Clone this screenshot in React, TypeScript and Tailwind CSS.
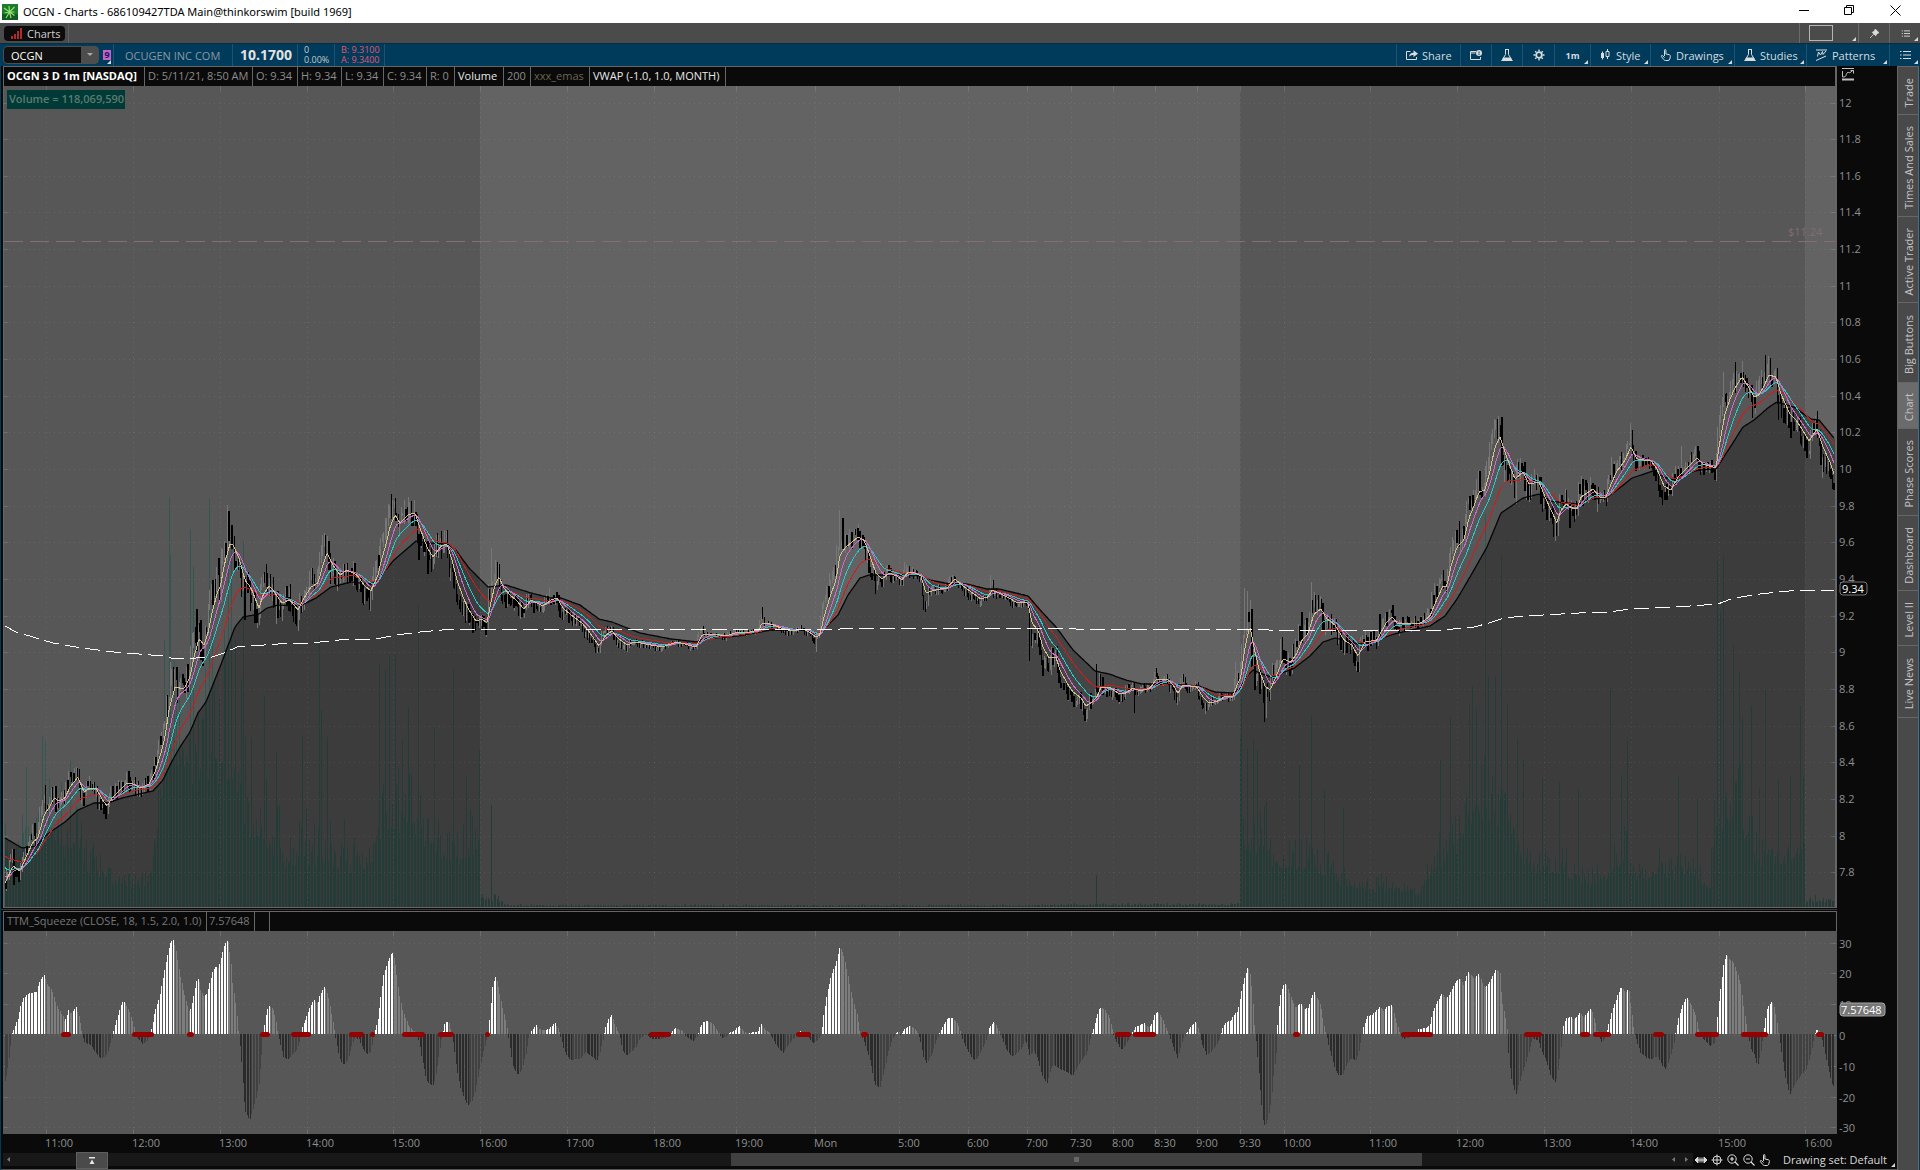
import { ReactNode } from 'react';

type Pt = [number, number];

// "x,y x,y ..." -> points
const parse = (s: string): Pt[] => s.trim().split(/\s+/).map((p) => p.split(',').map(Number) as Pt);

const fast = parse(`5,883 13,866 20,871 27,855 33,842 38,838 42,823 45,813 49,808 54,798 59,801 65,798 70,787 78,777 84,792
90,788 96,788 102,799 107,806 112,798 118,792 127,783 133,784 141,788 149,784 155,772 161,753 165,737 169,710 175,687 184,689
190,677 194,657 199,639 204,645 208,633 212,613 218,590 220,588 225,562 230,544 233,545 239,558 245,580 251,588 259,608
263,595 269,586 273,590 282,603 290,600 298,610 304,598 311,587 318,583 322,568 327,553 333,565 340,575 347,570 357,575
364,585 371,591 378,575 382,558 386,545 390,527 395,515 400,523 408,515 415,513 420,528 427,547 433,557 441,546 447,544
452,560 457,580 463,597 469,610 476,621 482,619 487,623 491,602 495,585 499,577 504,588 510,595 516,600 524,609 531,600
543,606 551,600 557,598 563,608 571,615 582,623 588,630 599,646 606,635 612,631 618,638 627,645 635,642 646,644 662,647
677,642 696,647 702,635 713,634 726,636 738,632 750,632 759,630 762,623 771,624 781,628 791,631 803,629 809,632 816,637
820,635 824,617 830,597 836,580 840,555 846,547 852,542 858,537 864,540 869,553 876,573 882,579 889,573 897,576 902,580
907,573 913,572 921,576 926,593 932,591 940,589 947,588 955,579 962,585 971,592 981,599 988,597 992,590 999,593 1009,598
1016,602 1028,603 1032,623 1038,630 1043,647 1049,658 1056,657 1060,670 1067,683 1073,692 1081,698 1086,706 1091,703
1097,697 1101,687 1109,687 1118,693 1124,694 1133,688 1140,691 1150,688 1156,680 1167,679 1173,685 1178,693 1183,685
1197,687 1203,697 1209,703 1218,701 1224,697 1233,696 1237,685 1241,677 1244,653 1248,633 1250,627 1254,647 1259,669
1265,686 1270,690 1276,677 1283,659 1291,662 1297,653 1302,640 1308,634 1314,614 1321,609 1327,619 1335,625 1344,640
1352,645 1358,656 1365,642 1377,640 1386,623 1392,617 1398,624 1411,623 1421,623 1430,616 1434,606 1438,597 1443,586
1447,586 1451,566 1457,547 1464,540 1469,518 1474,506 1479,492 1485,490 1490,471 1495,447 1500,437 1506,455 1511,469
1515,479 1523,472 1529,484 1539,482 1546,499 1551,510 1557,523 1560,512 1566,504 1572,508 1577,509 1581,497 1593,489
1600,497 1606,497 1611,484 1617,471 1624,462 1631,447 1637,459 1651,461 1657,469 1664,486 1671,490 1678,477 1687,468
1697,458 1703,464 1716,468 1719,447 1725,414 1730,399 1735,388 1742,377 1748,386 1754,397 1759,395 1764,386 1769,375
1776,377 1781,394 1790,414 1796,420 1802,429 1809,441 1817,429 1823,447 1830,462 1834,474`);

const slow = parse(`5,838 22,848 37,846 43,838 49,833 65,822 78,810 94,803 108,803 122,798 139,794 153,791 163,780 171,763
180,747 190,732 198,713 206,702 212,687 220,667 229,643 235,627 243,617 259,614 267,608 278,605 300,606 316,598 331,587
351,582 371,584 378,580 384,572 394,560 408,548 416,541 429,543 447,544 455,549 469,568 488,587 506,585 531,593 551,598
561,598 580,605 599,619 612,622 640,633 671,639 697,642 703,639 738,636 771,630 805,630 816,633 822,632 830,623 838,615
848,595 860,578 869,575 901,575 922,576 930,580 950,584 967,584 987,589 999,589 1016,593 1028,596 1042,612 1056,627
1073,650 1095,671 1109,674 1126,680 1142,684 1167,684 1199,686 1215,692 1233,693 1240,688 1248,675 1253,670 1260,673
1271,677 1276,677 1281,673 1293,669 1310,656 1323,642 1335,638 1344,640 1358,644 1377,640 1394,634 1411,630 1430,626
1445,616 1457,599 1470,577 1487,547 1501,513 1523,498 1539,494 1550,501 1558,502 1577,504 1592,499 1606,498 1617,490
1632,478 1653,471 1664,477 1672,480 1685,474 1699,470 1716,469 1729,449 1743,427 1754,420 1769,407 1777,402 1794,407
1811,419 1819,420 1834,438`);

const vwap = `5,626 16,632 33,637 53,643 82,648 114,652 163,656 171,658 196,658 212,657 224,653 237,647 278,644 310,643
339,640 376,639 396,635 420,632 453,629 840,629 845,628 1070,628 1076,629 1252,629 1269,630 1445,630 1453,629 1474,627
1489,623 1504,618 1525,616 1579,613 1609,612 1630,609 1676,607 1718,604 1731,599 1752,595 1777,592 1802,590 1834,590`;

// half height of the one minute noise
const noise = parse(`5,9 40,10 100,8 160,9 170,16 240,17 300,14 400,13 480,12 500,10 540,7 600,5 650,3 750,3 820,4 838,12
870,9 900,5 1025,4 1032,10 1090,9 1130,6 1232,5 1243,14 1275,15 1320,11 1400,7 1440,10 1500,13 1560,12 1620,9 1650,8
1710,7 1722,14 1780,12 1834,9`);

const wicks = parse(`14,885 46,785 78,768 103,814 170,662 197,609 227,505 229,511 233,527 245,620 258,626 266,564 277,624
300,620 325,533 327,538 363,605 386,518 391,494 394,502 404,500 409,497 415,500 419,560 428,574 438,533 445,530 473,633
476,631 487,629 491,548 497,562 524,618 549,588 599,652 762,607 763,614 816,652 829,573 840,510 843,518 858,524 876,594
905,562 924,610 990,575 1030,661 1043,676 1052,675 1073,707 1085,718 1086,722 1097,664 1134,713 1156,668 1206,714
1236,662 1244,588 1248,591 1250,600 1255,690 1265,722 1267,712 1282,637 1301,612 1312,582 1318,595 1320,596 1358,672
1380,614 1392,605 1443,570 1460,521 1480,471 1495,420 1498,416 1501,417 1504,482 1526,500 1546,520 1557,536 1570,528
1590,477 1598,512 1612,457 1630,423 1632,430 1663,505 1667,500 1681,446 1697,446 1723,372 1735,362 1742,361 1752,418
1766,355 1768,356 1779,420 1790,438 1806,458 1818,411 1823,478 1832,489`);

const volumeLevel = parse(`5,80 30,80 45,105 80,70 100,50 115,36 140,30 150,45 155,85 165,190 175,180 190,190 215,210
240,190 247,120 270,95 290,60 320,75 340,62 370,52 385,120 420,110 450,65 480,80 481,12 495,10 510,2 1027,2 1090,3 1230,3
1239,5 1240,100 1260,90 1280,55 1310,62 1340,38 1370,24 1400,26 1420,16 1430,45 1460,100 1480,140 1505,120 1520,65
1560,50 1580,34 1606,34 1620,65 1640,42 1690,48 1710,26 1718,130 1740,120 1760,60 1804,75 1806,8 1835,8`);

const volumeSpikes = parse(`27,767 43,736 45,741 70,761 165,640 169,497 170,555 191,529 194,567 210,499 212,600 224,630
228,555 231,540 236,640 243,541 252,738 265,696 277,751 302,737 320,637 322,710 327,737 379,664 386,670 389,655 395,655
402,740 409,708 418,606 435,726 453,670 466,775 479,750 491,805 1097,875 1240,737 1242,697 1248,749 1254,740 1257,750
1300,765 1312,715 1324,790 1344,808 1441,760 1450,718 1469,704 1473,686 1477,709 1486,515 1488,676 1495,677 1502,555
1508,704 1517,738 1523,760 1542,778 1560,782 1578,790 1611,688 1622,775 1628,740 1679,777 1697,799 1718,560 1721,612
1724,555 1734,645 1739,672 1742,717 1751,706 1760,787 1765,690 1779,779 1790,777 1800,706 1803,777`);

const squeeze = parse(`4,-51 7,-40 10,-20 12,0 18,15 21,28 24,36 29,41 37,42 39,50 44,60 47,50 51,46 53,42 57,28 63,18 65,12
69,24 71,20 76,27 79,18 82,3 83,-3 85,-9 90,-10 94,-16 100,-24 105,-23 109,-15 113,-2 114,4 118,18 122,32 125,32 129,24
133,12 135,3 137,-3 143,-10 147,-7 150,-1 152,7 155,22 160,38 164,60 167,77 170,90 173,95 176,85 180,60 184,42 188,28
189,22 191,25 194,40 197,55 199,55 201,44 204,38 207,40 210,52 213,64 216,68 219,66 221,75 224,88 228,95 231,76 233,50
236,30 238,10 240,-10 242,-32 244,-65 246,-78 250,-86 253,-76 256,-65 259,-50 262,-20 263,-6 264,4 267,24 269,28 273,26
276,15 278,2 280,-8 284,-24 289,-25 293,-20 297,-16 301,-4 302,6 306,15 310,27 314,34 318,30 320,38 325,48 329,35 333,12
335,1 337,-10 340,-25 344,-31 348,-25 352,-12 355,-4 359,-5 363,-14 367,-20 371,-18 373,-6 375,3 378,15 382,45 384,60
388,72 391,80 393,81 396,66 399,42 403,23 406,15 409,8 413,4 416,1 419,-7 422,-24 427,-47 433,-52 435,-46 438,-30 441,-10
443,1 445,11 447,13 450,10 451,2 454,-10 457,-35 461,-55 465,-66 468,-71 473,-66 476,-55 479,-38 482,-25 487,-6 489,4
491,28 493,50 496,58 499,45 503,25 506,13 508,1 510,-13 513,-32 518,-41 522,-36 526,-20 529,-4 532,3 536,9 539,5 545,4
549,5 555,11 558,6 561,-3 565,-18 570,-26 580,-25 586,-18 592,-22 597,-27 601,-15 604,-1 606,7 609,16 612,19 615,9 620,-2
623,-16 627,-22 633,-16 637,-12 640,-4 646,-1 652,-5 660,-5 668,-3 671,1 675,6 683,3 685,-1 693,-7 698,-2 700,6 703,12
707,13 713,11 718,2 722,-4 726,-3 730,1 736,5 739,8 743,4 748,0 754,2 758,2 761,10 766,4 771,-1 777,-12 783,-19 789,-11
795,-3 800,3 805,0 809,-4 814,-10 820,-3 822,5 824,22 828,45 832,60 836,70 840,88 844,78 848,60 852,38 857,20 860,3
864,-7 869,-22 872,-34 875,-50 880,-54 884,-38 888,-20 893,-5 898,3 901,-1 904,4 910,9 917,3 920,-4 924,-24 927,-29
932,-20 937,-6 941,3 944,10 948,16 953,16 958,10 961,0 965,-10 970,-20 974,-26 978,-24 983,-14 987,-4 989,6 994,13 999,4
1003,-6 1007,-16 1013,-23 1022,-14 1026,-6 1030,-22 1034,-17 1038,-25 1042,-40 1047,-50 1051,-35 1054,-31 1060,-35
1067,-38 1073,-42 1077,-34 1083,-24 1087,-20 1091,-4 1093,3 1096,14 1100,27 1105,24 1109,18 1113,3 1116,-7 1122,-16
1128,-7 1132,1 1136,7 1144,11 1149,7 1152,10 1155,20 1158,22 1162,17 1166,7 1169,-1 1173,-12 1178,-24 1183,-5 1187,1
1191,7 1196,13 1199,3 1202,-10 1207,-21 1213,-16 1220,-5 1222,4 1226,12 1231,13 1234,19 1238,23 1242,45 1245,58 1248,68
1251,58 1253,34 1255,5 1257,-15 1260,-50 1264,-92 1267,-90 1271,-70 1274,-38 1277,-15 1278,10 1280,36 1283,48 1286,51
1289,42 1292,35 1296,26 1299,30 1302,30 1304,25 1309,26 1311,35 1314,42 1318,35 1321,28 1324,10 1327,-3 1330,-16 1335,-35
1339,-41 1343,-41 1347,-30 1351,-24 1356,-27 1359,-18 1362,-2 1364,9 1368,18 1372,19 1376,23 1380,27 1384,23 1388,28
1392,29 1396,14 1399,5 1401,-2 1404,-5 1411,-3 1416,-1 1419,5 1425,6 1430,8 1433,22 1437,32 1442,40 1447,35 1451,43
1455,51 1460,56 1464,49 1468,62 1472,58 1475,55 1478,60 1481,55 1485,46 1488,49 1492,56 1496,65 1500,62 1502,35 1506,15
1508,0 1509,-25 1512,-48 1516,-60 1520,-48 1524,-35 1528,-22 1533,-5 1538,-6 1543,-20 1547,-28 1551,-42 1556,-49 1559,-30
1562,-5 1563,4 1566,16 1571,17 1574,14 1580,21 1584,17 1590,25 1593,22 1596,10 1598,-1 1602,-9 1606,-3 1608,7 1613,25
1617,37 1621,47 1626,42 1629,45 1632,20 1634,4 1636,-4 1641,-19 1647,-24 1652,-25 1658,-22 1662,-31 1666,-35 1670,-25
1674,-10 1676,3 1679,18 1682,27 1687,37 1691,30 1696,19 1699,5 1702,-3 1707,-9 1711,-12 1715,-9 1717,2 1718,22 1721,48
1724,72 1727,80 1730,74 1733,73 1737,62 1741,50 1745,20 1748,4 1751,-15 1755,-22 1758,-32 1762,-14 1764,5 1767,25 1772,33
1775,26 1778,6 1780,-8 1785,-40 1790,-61 1795,-50 1800,-43 1807,-34 1811,-20 1815,0 1817,5 1820,2 1822,-5 1827,-28
1833,-52`);

// stretches where the squeeze is on
const alerts = parse(`61,71 132,154 187,194 260,270 291,311 349,364 370,375 402,425 438,454 485,490 649,671 796,811 861,868
1115,1131 1133,1156 1293,1300 1401,1433 1524,1542 1580,1590 1593,1611 1653,1664 1695,1719 1741,1768 1816,1824`);

const times: [number, string][] = [
  [46, '11:00'], [133, '12:00'], [220, '13:00'], [307, '14:00'], [393, '15:00'], [480, '16:00'], [567, '17:00'],
  [654, '18:00'], [736, '19:00'], [815, 'Mon'], [899, '5:00'], [968, '6:00'], [1027, '7:00'], [1071, '7:30'],
  [1113, '8:00'], [1155, '8:30'], [1197, '9:00'], [1240, '9:30'], [1284, '10:00'], [1370, '11:00'], [1457, '12:00'],
  [1544, '13:00'], [1631, '14:00'], [1719, '15:00'], [1805, '16:00'],
];

const prices = Array.from({ length: 22 }, (_, i) => Math.round((12 - i * 0.2) * 10) / 10);
const priceY = (p: number) => Math.round(102.5 + (12 - p) * 183.3);
const squeezeLevels = [30, 20, 10, 0, -10, -20, -30];
const levelY = (v: number) => Math.round(1035 - v * 3.08);

const at = (pts: Pt[], x: number) => {
  if (x <= pts[0][0]) return pts[0][1];
  for (let i = 1; i < pts.length; i++) {
    const [x1, y1] = pts[i];
    if (x <= x1) {
      const [x0, y0] = pts[i - 1];
      return y0 + ((y1 - y0) * (x - x0)) / (x1 - x0);
    }
  }
  return pts[pts.length - 1][1];
};

let seed = 7;
const rand = () => {
  seed = (seed * 1103515245 + 12345) % 2147483648;
  return seed / 2147483648;
};

const STEP = 1.4515;
const xs = Array.from({ length: 1261 }, (_, i) => 5 + i * STEP);
const fastY = xs.map((x) => at(fast, x));
const slowY = xs.map((x) => at(slow, x));

const lag = (bars: number, start: number) => {
  const a = 1 / (bars + 1);
  let v = start;
  return fastY.map((y) => (v += a * (y - v)));
};
const slowLag = lag(21, 838);
// the middle averages follow the fast one, pulled towards the slow one
const middle = (bars: number, start: number, pull: number) =>
  lag(bars, start).map((y, i) => y + pull * (slowY[i] - slowLag[i]));

const toLine = (ys: number[]) => xs.map((x, i) => `${x.toFixed(1)},${ys[i].toFixed(1)}`).join(' ');
const fastLine = toLine(fastY);
const pinkLine = toLine(middle(3, 874, 0.05));
const cyanLine = toLine(middle(7, 866, 0.2));
const redLine = toLine(middle(13, 855, 0.5));
const slowLine = toLine(slowY);

let upPath = '';
let downPath = '';
let prev = fastY[0];
xs.forEach((x, i) => {
  const px = Math.floor(x);
  const n = at(noise, x);
  const slope = i ? fastY[i] - fastY[i - 1] : 0;
  const close = fastY[i] + Math.max(-20, Math.min(20, slope * 3)) + (rand() - 0.5) * n * 1.3;
  let top = Math.min(prev, close) - rand() * n * 0.6;
  let bottom = Math.max(prev, close) + rand() * n * 0.7 + 1;
  const wick = wicks.find(([wx]) => Math.abs(wx - x) < STEP / 2);
  if (wick) {
    top = Math.min(top, wick[1]);
    bottom = Math.max(bottom, wick[1]);
  }
  const up = close < prev;
  const w = !up && n > 6 && rand() > 0.5 ? 2 : 1;
  const d = `M${px} ${Math.round(top)}h${w}V${Math.round(bottom)}h-${w}z`;
  if (up) upPath += d;
  else downPath += d;
  prev = close;
});

const volumePath = xs
  .map((x) => {
    const level = at(volumeLevel, x);
    const spike = volumeSpikes.find(([sx]) => Math.abs(sx - x) < STEP / 2);
    const h = spike ? 907 - spike[1] : level * (0.55 + 0.85 * rand() * rand() + 0.15 * rand());
    return `M${Math.floor(x)} 907v${-Math.round(h)}h1V907z`;
  })
  .join('');

const bars = { up: '', upFade: '', down: '', downFade: '' };
xs.forEach((x) => {
  const v = at(squeeze, x);
  const before = at(squeeze, x - STEP);
  const h = Math.round(v) || (v > 0 ? 1 : -1);
  const d = `M${Math.floor(x)} 1034v${-h}h1v${h}z`;
  if (v > 0) bars[v >= before ? 'up' : 'upFade'] += d;
  else bars[v <= before ? 'down' : 'downFade'] += d;
});

function Corner() {
  return (
    <svg className="absolute right-0.5 bottom-0.5 size-[4px]" viewBox="0 0 4 4" aria-hidden="true">
      <path d="M4 0v4H0z" fill="#d8d8d8" />
    </svg>
  );
}

function Icon({ children, className = 'size-3' }: { children: ReactNode; className?: string }) {
  return (
    <svg viewBox="0 0 12 12" className={`shrink-0 ${className}`} fill="none" stroke="#dcdcdc" aria-hidden="true">
      {children}
    </svg>
  );
}

const flask = (
  <>
    <path d="M4 .5h4M4.500 1v4.500L1.800 10h8.400L7.500 5.500V1" />
    <path d="M2.500 8.500h7L12 12H0z" fill="#dcdcdc" stroke="none" />
  </>
);
const hand = (
  <path d="M4.5 7V1.2c0-.9 1.4-.9 1.4 0V5l3.3.7c1 .3 1.3.8 1.2 1.6L9.8 10c-.3 1-.9 1.5-1.8 1.5H5.6c-.9 0-1.4-.3-1.9-1L1.4 7.6c-.4-.9.5-1.5 1.2-.9l1.9 1.8" />
);
const list = <path d="M1 2.5h1.5M4 2.5h8M1 6h1.5M4 6h8M1 9.5h1.5M4 9.5h8" strokeWidth="1.2" />;

const tools: { width: string; label?: string; title: string; icon?: ReactNode; corner?: boolean }[] = [
  {
    width: 'w-16', label: 'Share', title: 'Share',
    icon: (
      <>
        <path d="M4.500 2.500h-4v8h10V8" />
        <path d="M3 8c.3-3 2-4.300 4.500-4.300V1.200L12 4.700 7.500 8V6C5.500 6 4 6.500 3 8z" fill="#dcdcdc" stroke="none" />
      </>
    ),
  },
  {
    width: 'w-[31px]', title: 'Detach',
    icon: (
      <>
        <path d="M6 2.500H.5v8h10V8M.5 4h5" />
        <circle cx="9" cy="4" r="3" fill="#dcdcdc" stroke="none" />
        <path d="M9 2.500v2M9 5v1" stroke="#003b5c" />
      </>
    ),
  },
  { width: 'w-[31px]', title: 'Edit studies', icon: flask },
  {
    width: 'w-8', title: 'Settings',
    icon: (
      <>
        <circle cx="6" cy="6" r="2.800" strokeWidth="1.800" />
        <path d="M6 .5v2M6 9.500v2M.5 6h2M9.500 6h2M2.200 2.200l1.300 1.300M8.500 8.500l1.300 1.300M2.200 9.800l1.300-1.300M8.500 3.500l1.300-1.300" strokeWidth="1.400" />
      </>
    ),
  },
  { width: 'w-9', title: 'Time frame', corner: true },
  {
    width: 'w-15', label: 'Style', title: 'Style', corner: true,
    icon: (
      <>
        <path d="M2.500 2.500v8M7.500 0v2.500M7.500 7.500V10" />
        <path d="M1 4h3v5H1z" fill="#dcdcdc" stroke="none" />
        <path d="M6 2.500h3v5H6z" />
      </>
    ),
  },
  { width: 'w-[84px]', label: 'Drawings', title: 'Drawings', corner: true, icon: hand },
  { width: 'w-[72px]', label: 'Studies', title: 'Studies', corner: true, icon: flask },
  {
    width: 'w-[83px]', label: 'Patterns', title: 'Patterns', corner: true,
    icon: <path d="M0 1h11M1.500 7.500l1-4.500 2 3 2-3.500.5 3 3-3.500M0 11.500l10-4.500" />,
  },
  { width: 'w-[31px]', title: 'Menu', icon: list, corner: true },
];

const studies = [
  { text: 'OCGN 3 D 1m [NASDAQ]', className: 'w-[141px] font-bold text-white' },
  { text: 'D: 5/11/21, 8:50 AM', className: 'w-[108px] text-[#8c8c8c]' },
  { text: 'O: 9.34', className: 'w-[45px] text-[#8c8c8c]' },
  { text: 'H: 9.34', className: 'w-11 text-[#8c8c8c]' },
  { text: 'L: 9.34', className: 'w-[42px] text-[#8c8c8c]' },
  { text: 'C: 9.34', className: 'w-[43px] text-[#8c8c8c]' },
  { text: 'R: 0', className: 'w-7 text-[#8c8c8c]' },
  { text: 'Volume', className: 'w-[49px] text-[#e8e8e8]' },
  { text: '200', className: 'w-[27px] text-[#8c8c8c]' },
  { text: 'xxx_emas', className: 'w-[59px] text-[#6c654f]' },
  { text: 'VWAP (-1.0, 1.0, MONTH)', className: 'w-[136px] text-[#e8e8e8]' },
];

const sideTabs = [
  { name: 'Trade', className: 'h-12' },
  { name: 'Times And Sales', className: 'h-[102px]' },
  { name: 'Active Trader', className: 'h-[86px]' },
  { name: 'Big Buttons', className: 'h-[80px]' },
  { name: 'Chart', className: 'h-[46px] bg-[#6b6b6b]' },
  { name: 'Phase Scores', className: 'h-[87px]' },
  { name: 'Dashboard', className: 'h-[75px]' },
  { name: 'Level II', className: 'h-[55px]' },
  { name: 'Live News', className: 'h-[72px]' },
];

function TitleBar() {
  return (
    <header className="flex h-[23px] shrink-0 items-center bg-white text-black">
      <svg className="mx-0.5 size-4 shrink-0" viewBox="0 0 16 16" aria-hidden="true">
        <path d="M0 0h16v16H0z" fill="#1e7a2c" />
        <path d="M0 10h16v6H0z" fill="#14591f" />
        <path d="M7.500 8 2 4M7.500 8 7 2M7.500 8l5-5M7.500 8l-5 1M7.500 8 4 14M7.500 8l1.500 6M7.500 8l5 3.500M7.500 8h5" stroke="#8fe070" strokeWidth="1.200" />
      </svg>
      <h1 className="ml-[3px] font-['Noto_Sans','Open_Sans',sans-serif] text-[11px]">OCGN - Charts - 686109427TDA Main@thinkorswim [build 1969]</h1>
      <div className="ml-auto flex h-full pr-0.5 pb-0.5">
        <button aria-label="Minimize" className="flex w-[46px] items-center justify-center">
          <svg className="size-[11px]" viewBox="0 0 11 11" stroke="#000" fill="none"><path d="M0 5.500h10" /></svg>
        </button>
        <button aria-label="Restore" className="flex w-[45px] items-center justify-center">
          <svg className="size-[11px]" viewBox="0 0 11 11" stroke="#000" fill="none"><path d="M.5 2.500h7v7h-7zM2.500 2V.5h7v7H8" /></svg>
        </button>
        <button aria-label="Close" className="flex w-[46px] items-center justify-center">
          <svg className="size-[11px]" viewBox="0 0 11 11" stroke="#000" fill="none"><path d="m.5.500 10 10M10.500.500l-10 10" /></svg>
        </button>
      </div>
    </header>
  );
}

function TabRow() {
  return (
    <div className="flex h-5 shrink-0 bg-[#4b4b4b] pl-1 text-[11px]">
      <div className="flex w-[65px] items-center border-r border-[#5f5f5f]">
        <button className="flex h-[15px] w-[61px] items-center gap-[5px] rounded bg-[#0c0c0c] pl-[7px] text-[#d0d0d0]">
          <svg className="size-[11px]" viewBox="0 0 11 11" fill="#b02a2a" aria-hidden="true">
            <path d="M0 8h2v3H0zM3 6h2v5H3zM6 3h2v8H6zM9 0h2v11H9z" />
          </svg>
          Charts
        </button>
      </div>
      <div className="ml-auto flex">
        <button aria-label="Layout" className="relative flex w-[59px] items-center border-l border-[#6a6a6a] pl-[9px]">
          <span className="h-4 w-6 border border-[#b5b5b5]" />
          <Corner />
        </button>
        <button aria-label="Pin" className="flex w-[31px] items-center justify-center border-l border-[#6a6a6a]">
          <Icon className="size-[9px]">
            <path d="M7 0 12 5 9.500 6 7.500 9 3 4.500 6 2.500zM5 7l-5 5" fill="#dcdcdc" />
          </Icon>
        </button>
        <button aria-label="Window menu" className="relative flex w-[31px] items-center justify-center border-l border-[#6a6a6a]">
          <Icon className="size-[9px]">{list}</Icon>
          <Corner />
        </button>
      </div>
    </div>
  );
}

function SymbolBar() {
  return (
    <div className="flex h-[23px] shrink-0 items-center border-t border-[#0a2c40] bg-[#003b5c] pl-[3px] text-[11px]">
      <div className="flex h-[18px] w-24 items-center rounded-sm border border-[#4d4d4d] bg-[#101010]">
        <input aria-label="Symbol" defaultValue="OCGN" className="w-[77px] min-w-0 bg-transparent pl-[7px] text-white outline-none" />
        <button aria-label="Symbol list" className="flex h-full w-[17px] items-center justify-center bg-[#4d4d4d]">
          <svg className="h-1 w-1.5" viewBox="0 0 6 4"><path d="M0 0h6L3 3z" fill="#aaa" /></svg>
        </button>
      </div>
      <button className="relative flex h-full w-[15px] items-center border-r border-[#1c5273] pl-1">
        <span className="flex h-2.5 w-2 items-center justify-center bg-[#c264cc] text-[9px] leading-[10px] font-bold text-[#2a1050]">9</span>
        <Corner />
      </button>
      <span className="flex h-full w-[119px] items-center border-r border-[#1c5273] pl-[11px] text-[#8b98a0]">OCUGEN INC COM</span>
      <span className="flex h-full w-[65px] items-center border-r border-[#1c5273] pl-[7px] text-[14px] font-bold text-[#e2e2e2]">10.1700</span>
      <span className="flex h-full w-[37px] flex-col justify-center border-r border-[#1c5273] pl-1.5 text-[9px] leading-[10px] text-[#c9c9c9]">
        <span>0</span>
        <span>0.00%</span>
      </span>
      <span className="flex h-full w-[50px] flex-col justify-center border-r border-[#1c5273] pl-1.5 text-[9px] leading-[10px] text-[#e0566a]">
        <span>B: 9.3100</span>
        <span>A: 9.3400</span>
      </span>
      <div className="ml-auto flex h-full text-[#d4dade]">
        {tools.map((t) => (
          <button
            key={t.title}
            title={t.title}
            className={`relative flex items-center border-l border-[#1c5273] ${t.width} ${t.label ? 'gap-1 pl-[9px]' : 'justify-center'}`}
          >
            {t.icon ? <Icon>{t.icon}</Icon> : <span className="text-[9px] font-bold">1m</span>}
            {t.label}
            {t.corner && <Corner />}
          </button>
        ))}
      </div>
    </div>
  );
}

function PricePlot() {
  return (
    <svg className="absolute inset-0 h-full w-full" viewBox="4 86 1831 821" preserveAspectRatio="none" fill="none" role="img" aria-label="OCGN price chart">
      <rect x="4" y="86" width="1831" height="821" fill="#575757" />
      <rect x="480" y="86" width="760" height="821" fill="#636363" />
      <rect x="1805" y="86" width="30" height="821" fill="#636363" />
      <path d={volumePath} fill="#335651" shapeRendering="crispEdges" />
      <polygon points={`5,907 ${slowLine} 1836,440 1836,907`} fill="#000" fillOpacity="0.3" />
      <g stroke="#fff" strokeOpacity="0.09" strokeDasharray="1 4">
        {prices.map((p) => <path key={p} d={`M4 ${priceY(p)}.5H1836`} />)}
        {times.map(([x]) => <path key={x} d={`M${x}.5 92V907`} />)}
      </g>
      <g stroke="#fff" strokeOpacity="0.13">
        {times.map(([x]) => <path key={x} d={`M${x}.5 86v5`} />)}
        {prices.map((p) => <path key={p} d={`M4 ${priceY(p)}.5h4M1831 ${priceY(p)}.5h5`} />)}
      </g>
      <path d="M4 241.500H1836" stroke="#836f73" strokeDasharray="19 7" />
      <text x="1788" y="236" fontSize="11" fill="#816d70">$11.24</text>
      <g shapeRendering="crispEdges">
        <path d={upPath} fill="#777" />
        <path d={downPath} fill="#000" />
      </g>
      <polyline points={slowLine} stroke="#050505" strokeWidth="1.300" />
      <g shapeRendering="crispEdges">
        <polyline points={redLine} stroke="#c81e1e" />
        <polyline points={cyanLine} stroke="#28c8c8" />
        <polyline points={pinkLine} stroke="#d068d0" />
        <polyline points={fastLine} stroke="#d2c090" />
        <polyline points={vwap} stroke="#fff" strokeDasharray="15 6" />
      </g>
    </svg>
  );
}

function SqueezePlot() {
  return (
    <svg className="h-full w-full" viewBox="3 931 1834 203" preserveAspectRatio="none" fill="none" role="img" aria-label="TTM squeeze histogram">
      <rect x="3" y="931" width="1834" height="203" fill="#575757" />
      <g stroke="#fff" strokeOpacity="0.1" strokeDasharray="1 4">
        {squeezeLevels.map((v) => <path key={v} d={`M4 ${levelY(v)}.5H1836`} />)}
        {times.map(([x]) => <path key={x} d={`M${x}.5 937V1128`} />)}
      </g>
      <g stroke="#fff" strokeOpacity="0.13">
        {times.map(([x]) => <path key={x} d={`M${x}.5 931v5M${x}.5 1129v5`} />)}
        {squeezeLevels.map((v) => <path key={v} d={`M4 ${levelY(v)}.5h4M1831 ${levelY(v)}.5h5`} />)}
      </g>
      <g shapeRendering="crispEdges">
        <path d={bars.upFade} fill="#7d7d7d" />
        <path d={bars.downFade} fill="#414141" />
        <path d={bars.down} fill="#2b2b2b" />
        <path d={bars.up} fill="#fff" />
      </g>
      <g fill="#960000">
        {alerts.map(([x0, x1]) => <rect key={x0} x={x0} y="1032" width={x1 - x0} height="5" rx="2.500" />)}
      </g>
    </svg>
  );
}

// labels are placed in percent so that they follow the plots when the window changes
function PriceAxis() {
  const pos = (y: number) => `${((y - 66) / 842) * 100}%`;
  return (
    <svg className="h-full w-[60px] shrink-0 text-[11px]" fill="#8f8f8f" aria-label="Price axis">
      <g stroke="#c0c0c0" fill="none">
        <path d="M5 2.500h12" />
        <path d="M5 13.500h12" strokeWidth="2" />
        <path d="M5.500 5v6c4.500 0 3-2 4.500-4s2 1 4-1 1.500-1.500 2.500-1.500M13.500 4.500h3v3" />
      </g>
      {prices.map((p) => <text key={p} x="2" y={pos(priceY(p))} dy="4">{p}</text>)}
      <rect x="3" y={pos(582)} width="27" height="13" rx="3" fill="#0a0a0a" stroke="#777" />
      <text x="5" y={pos(589)} dy="4" fill="#fff">9.34</text>
    </svg>
  );
}

function SqueezeAxis() {
  const pos = (y: number) => `${((y - 911) / 223) * 100}%`;
  return (
    <svg className="h-full w-[60px] shrink-0 text-[11px]" fill="#8f8f8f" aria-label="Squeeze axis">
      {squeezeLevels.map((v) => <text key={v} x="2" y={pos(levelY(v))} dy="5">{v}</text>)}
      <rect x="3" y={pos(1003)} width="45" height="13" rx="3" fill="#777" stroke="#a5a5a5" />
      <text x="4" y={pos(1010)} dy="4" fill="#fff">7.57648</text>
    </svg>
  );
}

function ScrollRow() {
  return (
    <div className="relative flex h-4 shrink-0 pl-0.5">
      <div className="flex h-[13px] flex-1 bg-[#181818]">
        <button aria-label="Scroll left" className="w-2 pl-1">
          <svg className="h-[5px] w-[3px]" viewBox="0 0 3 5"><path d="M3 0v5L0 2.500z" fill="#777" /></svg>
        </button>
        <div className="grow-[720] basis-0" />
        <div className="flex grow-[691] basis-0 items-center justify-center bg-[#404040]">
          <span className="size-[5px] bg-[#666]" />
        </div>
        <div className="relative grow-[271] basis-0">
          <div className="absolute inset-y-0 right-[5px] flex items-center gap-[10px]">
            <svg className="h-[5px] w-[3px]" viewBox="0 0 3 5"><path d="M3 0v5L0 2.500z" fill="#777" /></svg>
            <svg className="h-[5px] w-[3px]" viewBox="0 0 3 5"><path d="M0 0v5l3-2.500z" fill="#777" /></svg>
          </div>
        </div>
      </div>
      <button aria-label="Expand studies" className="absolute -top-px left-[75px] flex h-[17px] w-8 items-center justify-center border border-[#5e5e5e] bg-[#4a4a4a]">
        <svg className="size-2" viewBox="0 0 8 8"><path d="M1 0h6v1.500H1zM4 2.500 6.500 7h-5z" fill="#e6e6e6" /></svg>
      </button>
      <div className="flex h-[13px] w-[204px] items-center gap-1 pl-0.5">
        <button aria-label="Fit width"><Icon><path d="M0 6l3-3v6zM12 6 9 3v6zM5 3.500v5M7 3.500v5M3 6h6" fill="#dcdcdc" /></Icon></button>
        <button aria-label="Crosshair"><Icon><circle cx="6" cy="6" r="4" /><path d="M6 .5v11M.5 6h11" /></Icon></button>
        <button aria-label="Zoom in"><Icon><circle cx="5" cy="5" r="4.200" /><path d="m8 8 3.500 3.500M5 3v4M3 5h4" strokeWidth="1.200" /></Icon></button>
        <button aria-label="Zoom out"><Icon><circle cx="5" cy="5" r="4.200" /><path d="m8 8 3.500 3.500M3 5h4" strokeWidth="1.200" /></Icon></button>
        <button aria-label="Pan"><Icon>{hand}</Icon></button>
        <button className="ml-2 text-[11px] whitespace-nowrap text-[#d8d8d8]">Drawing set: Default</button>
      </div>
      <Corner />
    </div>
  );
}

export default function App() {
  return (
    <div className="flex h-screen flex-col bg-[#0a0a0a] font-['Open_Sans','Noto_Sans',sans-serif] leading-none">
      <TitleBar />
      <TabRow />
      <SymbolBar />
      <main className="flex min-h-0 flex-1 border-x border-[#003b5c]">
        <div className="flex min-w-0 flex-1 flex-col">
          <section className="flex min-h-0 flex-1 pl-0.5">
            <div className="flex min-w-0 flex-1 flex-col border-r-2 border-b border-l border-[#666]">
              <div className="flex h-5 shrink-0 border-t border-[#666] text-[11px]">
                {studies.map((s) => (
                  <span key={s.text} className={`flex shrink-0 items-center border-r border-[#666] pb-0.5 pl-[3px] whitespace-nowrap ${s.className}`}>
                    {s.text}
                  </span>
                ))}
              </div>
              <div className="relative min-h-0 flex-1">
                <PricePlot />
                <span className="absolute top-1 left-[3px] flex h-[19px] w-[118px] items-center bg-[#003a36] pb-0.5 pl-0.5 text-[11px] font-semibold whitespace-nowrap text-[#5c7a72]">
                  Volume = 118,069,590
                </span>
              </div>
            </div>
            <PriceAxis />
          </section>
          <div className="my-px mr-[60px] h-px shrink-0 bg-[#3a3537]" />
          <section className="flex h-[223px] shrink-0 pl-0.5">
            <div className="flex min-w-0 flex-1 flex-col">
              <div className="flex h-5 shrink-0 border-x border-t border-[#666] text-[11px] text-[#777]">
                <span className="flex w-[203px] items-center border-r border-[#666] pb-0.5 pl-[3px] whitespace-nowrap">TTM_Squeeze (CLOSE, 18, 1.5, 2.0, 1.0)</span>
                <span className="flex w-12 items-center border-r border-[#666] pb-0.5 pl-0.5">7.57648</span>
                <span className="w-[15px] border-r border-[#666]" />
              </div>
              <div className="min-h-0 flex-1">
                <SqueezePlot />
              </div>
            </div>
            <SqueezeAxis />
          </section>
          <div className="h-[19px] shrink-0 pr-[60px] pl-[3px]">
            <svg className="h-full w-full overflow-visible text-[11px]" fill="#8f8f8f" aria-label="Time axis">
              {times.map(([x, label]) => <text key={x} x={`${((x - 5) / 1833) * 100}%`} y="13">{label}</text>)}
            </svg>
          </div>
          <ScrollRow />
          <div className="h-px shrink-0 bg-[#555]" />
        </div>
        <nav className="w-[22px] shrink-0 border-x border-t border-[#666] bg-[#494949] text-[11px] text-[#c4c4c4]">
          {sideTabs.map((t) => (
            <button key={t.name} className={`flex w-full items-center justify-center border-b border-[#666] pt-1 ${t.className}`}>
              <span className="rotate-180 whitespace-nowrap [writing-mode:vertical-rl]">{t.name}</span>
            </button>
          ))}
        </nav>
      </main>
    </div>
  );
}
